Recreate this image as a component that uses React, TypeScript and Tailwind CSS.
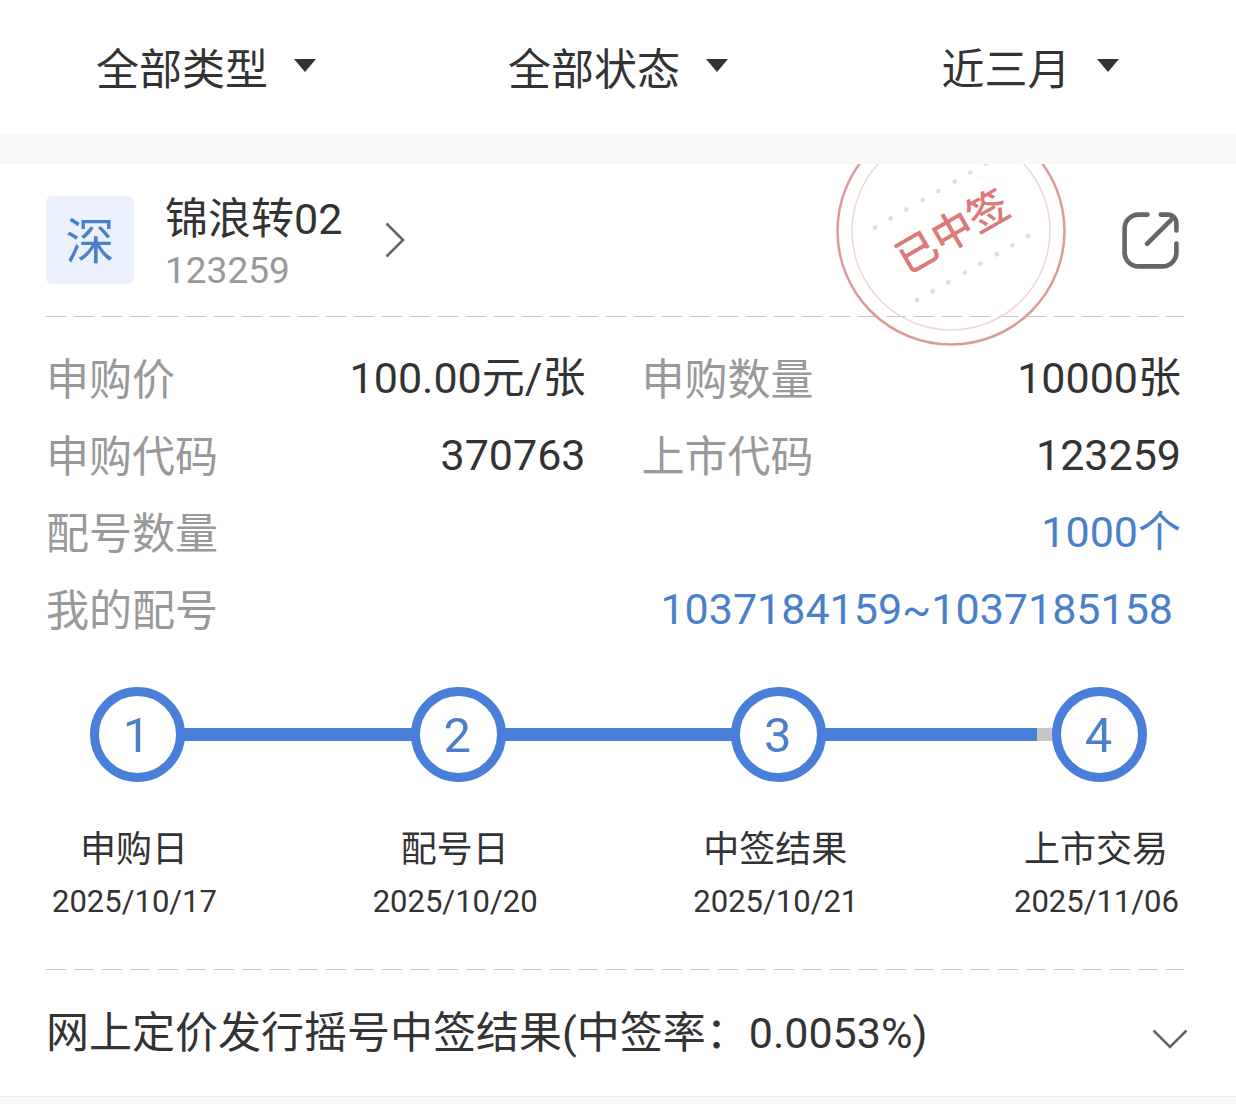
import React, { useState } from 'react';

interface Field {
  label: string;
  value: string;
  wide?: boolean;
  link?: boolean;
  inset?: boolean;
}

interface Step {
  title: string;
  date: string;
  // share of the bar after this step that is already covered, in percent
  progress?: number;
}

const filters = [
  { name: '类型', value: '全部类型' },
  { name: '状态', value: '全部状态' },
  { name: '时间', value: '近三月' },
];

const fields: Field[] = [
  { label: '申购价', value: '100.00元/张' },
  { label: '申购数量', value: '10000张' },
  { label: '申购代码', value: '370763' },
  { label: '上市代码', value: '123259' },
  { label: '配号数量', value: '1000个', wide: true, link: true },
  { label: '我的配号', value: '1037184159~1037185158', wide: true, link: true, inset: true },
];

const steps: Step[] = [
  { title: '申购日', date: '2025/10/17', progress: 100 },
  { title: '配号日', date: '2025/10/20', progress: 100 },
  { title: '中签结果', date: '2025/10/21', progress: 93 },
  { title: '上市交易', date: '2025/11/06' },
];

const FilterBar: React.FC = () => (
  <header className="grid h-[134px] grid-cols-3">
    {filters.map((filter) => (
      <label key={filter.name} className="flex items-center justify-center gap-[26px]">
        <select
          aria-label={filter.name}
          className="field-sizing-content mt-1.5 appearance-none bg-transparent leading-[64px] outline-none"
        >
          <option>{filter.value}</option>
        </select>
        <svg width="22" height="13" viewBox="0 0 22 13" className="mb-1" aria-hidden="true">
          <path d="M0 0h22L11 13z" fill="#333333" />
        </svg>
      </label>
    ))}
  </header>
);

const Divider: React.FC = () => (
  <div className="ml-[46px] mr-[52px] h-px bg-[repeating-linear-gradient(90deg,#c8c8c8_0_20px,transparent_20px_28px)]" />
);

const Stamp: React.FC = () => {
  const dots = [-64, -46, -28, -9, 9, 28, 46, 64];
  return (
    <svg
      width="232"
      height="232"
      viewBox="-116 -116 232 232"
      className="pointer-events-none absolute -top-[49px] right-[169px]"
    >
      <circle r="113.5" fill="none" stroke="#de9a98" strokeWidth="2.5" />
      <circle r="99" fill="none" stroke="#f0d6d5" strokeWidth="1.5" />
      <g transform="rotate(-30)">
        {dots.map((x) => (
          <g key={x} fill="#f0d6d5">
            <circle cx={x} cy="-41" r="2.4" />
            <circle cx={x} cy="43" r="2.4" />
          </g>
        ))}
        <text x="1" y="16" textAnchor="middle" fontSize="41" fontWeight="500" fill="#db7a78">
          已中签
        </text>
      </g>
    </svg>
  );
};

const CardHeader: React.FC = () => (
  <div className="flex items-center justify-between py-8 pl-[46px] pr-[56px]">
    <button className="flex h-[88px] items-center text-left">
      <span className="flex size-[88px] items-center justify-center rounded-md bg-[#eaf1fc] pt-1.5 text-[49px] text-[#4a7fc9]">
        深
      </span>
      <span className="ml-[31px] flex flex-col pt-2">
        <span className="leading-[54px]">锦浪转02</span>
        <span className="text-[37px] leading-[50px] text-[#999999]">123259</span>
      </span>
      <svg width="20" height="36" viewBox="0 0 20 36" className="ml-[43px]" aria-hidden="true">
        <path d="M1.5 1.5L18 18L1.5 34.5" fill="none" stroke="#666666" strokeWidth="2.6" />
      </svg>
    </button>
    <button aria-label="分享" className="pt-0.5">
      <svg
        width="58"
        height="58"
        viewBox="0 0 58 58"
        fill="none"
        stroke="#666666"
        strokeWidth="4.6"
        strokeLinecap="round"
      >
        <path d="M25.5 2.6H16.6a14 14 0 0 0-14 14v23.8a14 14 0 0 0 14 14h23.8a14 14 0 0 0 14-14V31.5" />
        <path d="M38.8 2.6H46a8.4 8.4 0 0 1 8.4 8.4v7.4" />
        <path d="M25 31.8L51.4 5.6" />
      </svg>
    </button>
  </div>
);

const FieldList: React.FC = () => (
  <dl className="grid grid-cols-2 gap-x-14 pl-[46px] pr-[55px] pt-[23px]">
    {fields.map((field) => (
      <div
        key={field.label}
        className={`flex h-[77px] items-center justify-between ${field.wide ? 'col-span-2' : ''}`}
      >
        <dt className="pt-1 text-[#999999]">{field.label}</dt>
        <dd className={`${field.link ? 'text-[#4a7fc9]' : ''} ${field.inset ? 'pr-2' : ''}`}>
          {field.value}
        </dd>
      </div>
    ))}
  </dl>
);

const Stepper: React.FC = () => (
  <div className="pb-[42px] pt-[39px]">
    <div className="flex items-center pl-[90px] pr-[89px]">
      {steps.map((step, i) => (
        <React.Fragment key={step.title}>
          <span className="z-10 flex size-[95px] shrink-0 items-center justify-center rounded-full border-9 border-[#4a7fd9] bg-white pr-0.5 pt-0.5 text-[49px] text-[#4a7fc9]">
            {i + 1}
          </span>
          {step.progress !== undefined && (
            <span className="-mx-px h-[13px] flex-1 bg-[#c6c6c6]">
              <span className="block h-full bg-[#4a7fd9]" style={{ width: `${step.progress}%` }} />
            </span>
          )}
        </React.Fragment>
      ))}
    </div>
    <ol className="flex justify-between pl-[52px] pr-[58px] pt-[41px]">
      {steps.map((step) => (
        <li key={step.title} className="w-[164px] text-center">
          <p className="text-[36px] leading-[54px]">{step.title}</p>
          <p className="text-[31px] leading-[50px]">{step.date}</p>
        </li>
      ))}
    </ol>
  </div>
);

const App: React.FC = () => {
  const [open, setOpen] = useState<boolean>(false);

  return (
    <div
      lang="zh-CN"
      className="flex min-h-screen flex-col bg-[#f7f8fa] font-[Roboto,'Noto_Sans_CJK_SC',sans-serif] text-[43px] text-[#333333]"
    >
      <div className="bg-white">
        <FilterBar />
      </div>

      <main className="relative mt-[30px] overflow-hidden border-b border-[#ebebeb] bg-white">
        <CardHeader />
        <Divider />
        <Stamp />
        <FieldList />
        <Stepper />
        <Divider />
        <button
          className="flex h-[126px] w-full items-center justify-between pl-[46px] pr-12 text-left"
          aria-expanded={open}
          onClick={() => setOpen(!open)}
        >
          网上定价发行摇号中签结果(中签率：0.0053%)
          <svg width="36" height="20" viewBox="0 0 36 20" className="mt-3" aria-hidden="true">
            <path d="M1.5 1.5L18 18L34.5 1.5" fill="none" stroke="#666666" strokeWidth="2.6" />
          </svg>
        </button>
      </main>
    </div>
  );
};

export default App;
